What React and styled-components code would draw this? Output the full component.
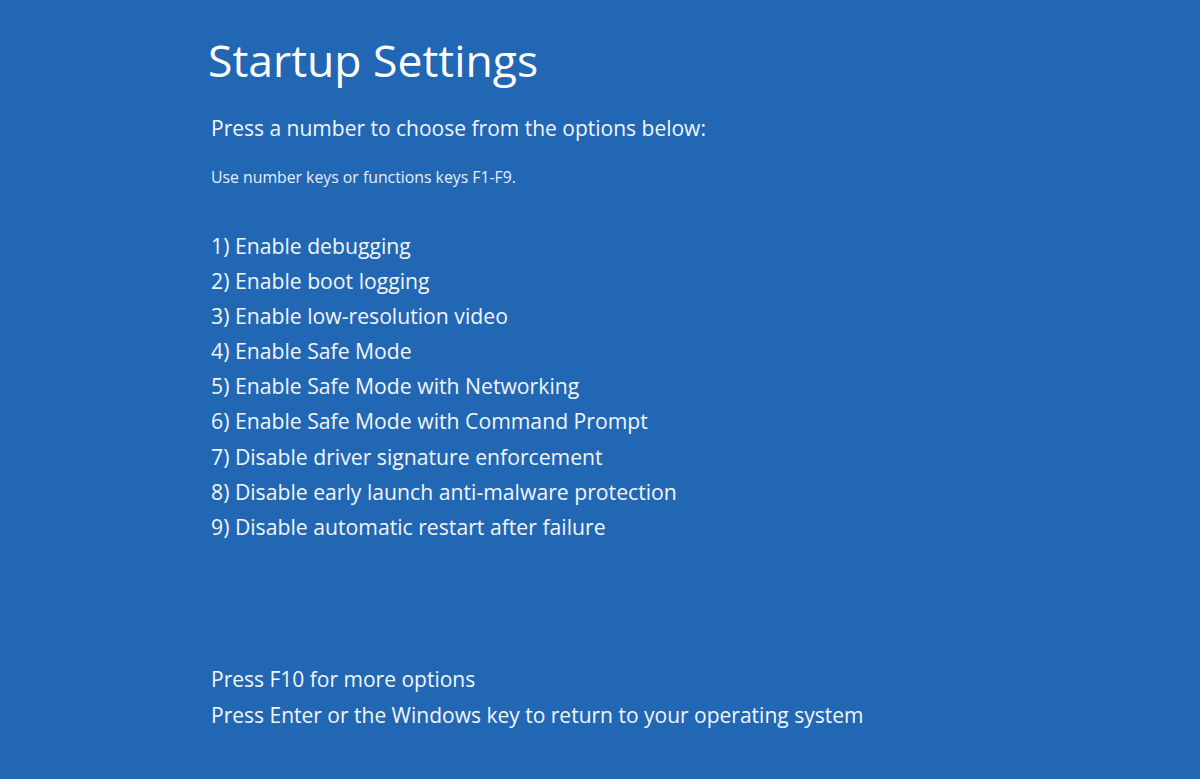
import React from 'react'
import styled, { createGlobalStyle } from 'styled-components'

const GlobalStyle = createGlobalStyle`
  html, body {
    margin: 0;
    padding: 0;
    background: #2267b4;
  }
  body {
    font-family: "Open Sans", "Noto Sans", "DejaVu Sans", sans-serif;
    color: #fff;
  }
`

const Screen = styled.div`
  width: 100%;
  height: 779px;
  overflow: hidden;
  background: #2267b4;
  display: flex;
  flex-direction: column;
  padding: 34px 0 0 208px;
  box-sizing: border-box;
`

const Title = styled.h1`
  margin: 0;
  font-size: 44.5px;
  font-weight: 400;
  line-height: 52px;
`

const Lead = styled.p`
  margin: 28px 0 0 3px;
  font-size: 21px;
  line-height: 28px;
  color: #f2f6fb;
`

const Hint = styled.p`
  margin: 25px 0 0 3px;
  font-size: 15.8px;
  line-height: 20px;
  color: #e8eef7;
`

const Options = styled.ol`
  list-style: none;
  margin: 41px 0 0 3px;
  padding: 0;
`

const Option = styled.li`
  font-size: 21.2px;
  line-height: 35.1px;
  color: #f2f6fb;
`

const Footer = styled.div`
  margin: 117.5px 0 0 3px;
`

const FooterLine = styled.p`
  margin: 0;
  font-size: 21px;
  line-height: 36px;
  color: #f2f6fb;
`

const options = [
  'Enable debugging',
  'Enable boot logging',
  'Enable low-resolution video',
  'Enable Safe Mode',
  'Enable Safe Mode with Networking',
  'Enable Safe Mode with Command Prompt',
  'Disable driver signature enforcement',
  'Disable early launch anti-malware protection',
  'Disable automatic restart after failure',
]

export default function App() {
  return (
    <>
      <GlobalStyle />
      <Screen>
        <Title>Startup Settings</Title>
        <Lead>Press a number to choose from the options below:</Lead>
        <Hint>Use number keys or functions keys F1-F9.</Hint>
        <Options>
          {options.map((label, i) => (
            <Option key={label}>{i + 1}) {label}</Option>
          ))}
        </Options>
        <Footer>
          <FooterLine>Press F10 for more options</FooterLine>
          <FooterLine>Press Enter or the Windows key to return to your operating system</FooterLine>
        </Footer>
      </Screen>
    </>
  )
}
